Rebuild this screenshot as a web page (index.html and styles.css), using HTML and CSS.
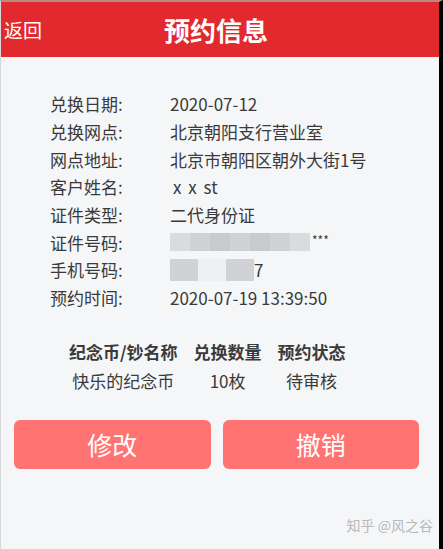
FILE: index.html
```html
<!DOCTYPE html>
<html lang="zh">
<head>
  <meta charset="UTF-8" />
  <meta name="viewport" content="width=device-width, initial-scale=1.0" />
  <title>预约信息</title>
  <link rel="stylesheet" href="styles.css">
</head>
<body>
  <div class="page">
    <!-- 顶部标题栏 -->
    <header class="topbar">
      <span class="back">返回</span>
      <h1>预约信息</h1>
    </header>

    <!-- 预约详情 -->
    <div class="info">
      <div class="row"><span class="label">兑换日期:</span><span class="value">2020-07-12</span></div>
      <div class="row"><span class="label">兑换网点:</span><span class="value">北京朝阳支行营业室</span></div>
      <div class="row"><span class="label">网点地址:</span><span class="value">北京市朝阳区朝外大街1号</span></div>
      <div class="row"><span class="label">客户姓名:</span><span class="value name">x x st</span></div>
      <div class="row"><span class="label">证件类型:</span><span class="value">二代身份证</span></div>
      <div class="row">
        <span class="label">证件号码:</span>
        <span class="value masked">
          <span class="mosaic id-mosaic"><i></i><i></i><i></i><i></i><i></i><i></i><i></i></span><span class="stars">***</span>
        </span>
      </div>
      <div class="row">
        <span class="label">手机号码:</span>
        <span class="value masked">
          <span class="mosaic phone-mosaic"><i></i><i class="light"></i><i></i></span>7
        </span>
      </div>
      <div class="row"><span class="label">预约时间:</span><span class="value">2020-07-19 13:39:50</span></div>
    </div>

    <!-- 纪念币列表 -->
    <table class="coins">
      <tr><th>纪念币/钞名称</th><th>兑换数量</th><th>预约状态</th></tr>
      <tr><td>快乐的纪念币</td><td>10枚</td><td>待审核</td></tr>
    </table>

    <div class="actions">
      <button>修改</button>
      <button>撤销</button>
    </div>

    <div class="mark">知乎 @风之谷</div>
  </div>
</body>
</html>
```
FILE: styles.css
```css
body {
  margin: 0;
  font-family: "Noto Sans CJK SC", "Noto Sans", sans-serif;
  background: #f5f6f8;
  color: #333;
}

.page {
  height: 549px;
  border-top: 2px solid #b98a80;
  border-right: 4px solid #000;
  border-left: 1px solid #d8d9dc;
  box-sizing: border-box;
  overflow: hidden;
}

.topbar {
  height: 55px;
  background: #e2292e;
  color: #fff;
  display: flex;
  align-items: center;
  position: relative;
}

.back {
  position: absolute;
  left: 3px;
  font-size: 19px;
}

.topbar h1 {
  margin: 0 auto;
  font-size: 26px;
  font-weight: bold;
  padding-right: 8px;
}

.info {
  padding: 33px 0 0 49px;
}

.row {
  display: flex;
  height: 27.7px;
  align-items: center;
  font-size: 17px;
  color: #3a3a3a;
}

.label {
  width: 120px;
}

.name {
  padding-left: 3px;
  word-spacing: 3px;
}

.masked {
  display: flex;
  align-items: center;
}

.mosaic {
  display: flex;
  opacity: 0.8;
}

.mosaic i {
  display: block;
  background: #c9cacd;
}

.id-mosaic i {
  width: 20px;
  height: 18px;
}

.id-mosaic i:nth-child(odd) {
  background: #d4d5d8;
}

.id-mosaic i:nth-child(3),
.id-mosaic i:nth-child(5) {
  background: #bfc0c3;
}

.stars {
  font-size: 12px;
  margin-left: 2px;
  margin-top: -6px;
}

.phone-mosaic i {
  width: 28px;
  height: 22px;
}

.phone-mosaic i.light {
  background: #eeeff1;
}

.coins {
  margin: 26px 0 0 60px;
  border-collapse: collapse;
  font-size: 17px;
  color: #3a3a3a;
}

.coins th {
  font-weight: bold;
  padding: 0 8px;
  height: 28px;
}

.coins td {
  text-align: center;
  height: 27px;
}

.actions {
  display: flex;
  gap: 12px;
  margin: 25px 0 0 13px;
  width: 405px;
}

.actions button {
  flex: 1;
  height: 49px;
  border: none;
  border-radius: 6px;
  background: #ff7373;
  color: #fff;
  font-family: inherit;
  font-size: 25px;
}

.mark {
  text-align: right;
  padding-right: 6px;
  margin-top: 46px;
  font-size: 14px;
  color: #b6b8bb;
}
```
